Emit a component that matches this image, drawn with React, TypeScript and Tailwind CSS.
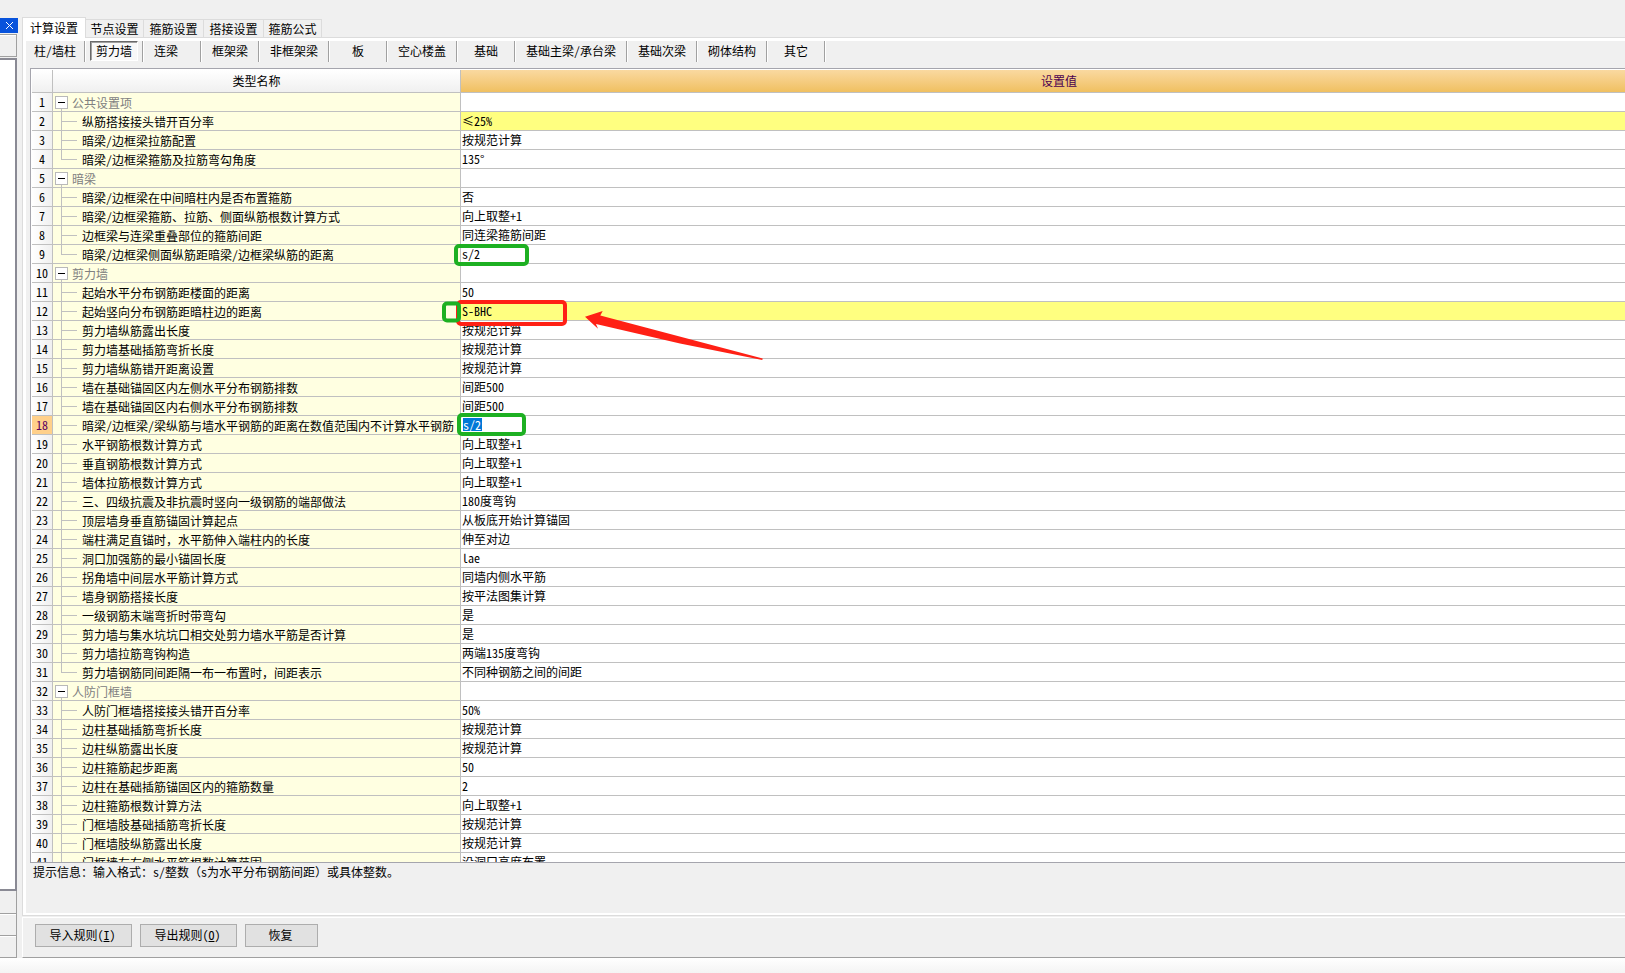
import React, { useState } from "react";

type Row = { name: string; value?: string; group?: boolean; last?: boolean; changed?: boolean };

const rows: Row[] = [
  { name: "公共设置项", group: true },
  { name: "纵筋搭接接头错开百分率", value: "≤25%", changed: true },
  { name: "暗梁/边框梁拉筋配置", value: "按规范计算" },
  { name: "暗梁/边框梁箍筋及拉筋弯勾角度", value: "135°", last: true },
  { name: "暗梁", group: true },
  { name: "暗梁/边框梁在中间暗柱内是否布置箍筋", value: "否" },
  { name: "暗梁/边框梁箍筋、拉筋、侧面纵筋根数计算方式", value: "向上取整+1" },
  { name: "边框梁与连梁重叠部位的箍筋间距", value: "同连梁箍筋间距" },
  { name: "暗梁/边框梁侧面纵筋距暗梁/边框梁纵筋的距离", value: "s/2", last: true },
  { name: "剪力墙", group: true },
  { name: "起始水平分布钢筋距楼面的距离", value: "50" },
  { name: "起始竖向分布钢筋距暗柱边的距离", value: "S-BHC", changed: true },
  { name: "剪力墙纵筋露出长度", value: "按规范计算" },
  { name: "剪力墙基础插筋弯折长度", value: "按规范计算" },
  { name: "剪力墙纵筋错开距离设置", value: "按规范计算" },
  { name: "墙在基础锚固区内左侧水平分布钢筋排数", value: "间距500" },
  { name: "墙在基础锚固区内右侧水平分布钢筋排数", value: "间距500" },
  { name: "暗梁/边框梁/梁纵筋与墙水平钢筋的距离在数值范围内不计算水平钢筋", value: "s/2" },
  { name: "水平钢筋根数计算方式", value: "向上取整+1" },
  { name: "垂直钢筋根数计算方式", value: "向上取整+1" },
  { name: "墙体拉筋根数计算方式", value: "向上取整+1" },
  { name: "三、四级抗震及非抗震时竖向一级钢筋的端部做法", value: "180度弯钩" },
  { name: "顶层墙身垂直筋锚固计算起点", value: "从板底开始计算锚固" },
  { name: "端柱满足直锚时，水平筋伸入端柱内的长度", value: "伸至对边" },
  { name: "洞口加强筋的最小锚固长度", value: "lae" },
  { name: "拐角墙中间层水平筋计算方式", value: "同墙内侧水平筋" },
  { name: "墙身钢筋搭接长度", value: "按平法图集计算" },
  { name: "一级钢筋末端弯折时带弯勾", value: "是" },
  { name: "剪力墙与集水坑坑口相交处剪力墙水平筋是否计算", value: "是" },
  { name: "剪力墙拉筋弯钩构造", value: "两端135度弯钩" },
  { name: "剪力墙钢筋同间距隔一布一布置时，间距表示", value: "不同种钢筋之间的间距", last: true },
  { name: "人防门框墙", group: true },
  { name: "人防门框墙搭接接头错开百分率", value: "50%" },
  { name: "边柱基础插筋弯折长度", value: "按规范计算" },
  { name: "边柱纵筋露出长度", value: "按规范计算" },
  { name: "边柱箍筋起步距离", value: "50" },
  { name: "边柱在基础插筋锚固区内的箍筋数量", value: "2" },
  { name: "边柱箍筋根数计算方法", value: "向上取整+1" },
  { name: "门框墙肢基础插筋弯折长度", value: "按规范计算" },
  { name: "门框墙肢纵筋露出长度", value: "按规范计算" },
  { name: "门框墙左右侧水平筋根数计算范围", value: "沿洞口高度布置" },
];

const EDITED_ROW = 17;
const tabs = ["计算设置", "节点设置", "箍筋设置", "搭接设置", "箍筋公式"];
const members = [
  "柱/墙柱", "剪力墙", "连梁\u00a0\u00a0", "框架梁", "非框架梁", "板", "空心楼盖",
  "基础", "基础主梁/承台梁", "基础次梁", "砌体结构", "其它",
];

// The half-width font feature also narrows these marks, so they opt out of it.
function Text({ children }: { children: string }) {
  return (
    <>
      {children.split(/([，（）])/).map((part, i) =>
        i % 2 ? (
          <span key={i} className="[font-feature-settings:normal]">{part}</span>
        ) : (
          part
        ),
      )}
    </>
  );
}

function TabBar() {
  return (
    <div role="tablist" className="flex h-5 items-end">
      {tabs.map((tab, i) => (
        <button
          key={tab}
          role="tab"
          aria-selected={i === 0}
          className={
            i === 0
              ? "z-10 -mb-px h-[21px] w-16 border border-b-0 border-[#dcdcdc] bg-white pb-px leading-4"
              : "h-[18px] w-[60px] border border-b-0 border-l-0 border-[#dcdcdc] leading-4 last:w-[58px] nth-2:w-[58px]"
          }
        >
          {tab}
        </button>
      ))}
    </div>
  );
}

function MemberBar() {
  const [active, setActive] = useState(1);
  return (
    <div className="flex h-[21px] gap-px">
      {members.map((label, i) => (
        <div
          key={label}
          className="flex min-w-[57px] justify-center border-r border-[#a0a0a0] shadow-[1px_0_0_#ffffff]"
        >
          <button
            aria-pressed={active === i}
            onClick={() => setActive(i)}
            className={
              active === i
                ? "h-5 border border-t-[#696969] border-r-white border-b-white border-l-[#696969] bg-[#f8f8f8] px-[5px] leading-[18px] whitespace-pre shadow-[inset_1px_1px_0_#a0a0a0]"
                : i === 0
                  ? "h-5 px-2 leading-5 whitespace-pre"
                  : "h-5 px-[10px] leading-5 whitespace-pre"
            }
          >
            {label}
          </button>
        </div>
      ))}
    </div>
  );
}

function TreeLabel({ row }: { row: Row }) {
  if (row.group) {
    return (
      <div className="flex h-[18px] items-center pl-[2px]">
        <svg width="13" height="18" viewBox="0 0 13 18" className="mr-1 shrink-0" shapeRendering="crispEdges">
          <rect x="0.5" y="3.5" width="12" height="12" fill="#fff" stroke="#b9b9b9" />
          <path d="M3 9.5h7" stroke="#000" />
          <path d="M6.5 16v2" stroke="#c0c0c0" />
        </svg>
        <span className="text-[#808080]">{row.name}</span>
      </div>
    );
  }
  return (
    <div className="flex h-[18px] items-center">
      <svg width="24" height="18" viewBox="0 0 24 18" className="mr-[5px] shrink-0" shapeRendering="crispEdges">
        <path d={row.last ? "M8.5 0v9.5H24" : "M8.5 0v18M8 9.5h16"} fill="none" stroke="#c0c0c0" />
      </svg>
      <span className="pt-px">
        <Text>{row.name}</Text>
      </span>
    </div>
  );
}

function Marks() {
  return (
    <svg
      aria-hidden="true"
      width="340"
      height="215"
      viewBox="431 230 340 215"
      className="pointer-events-none absolute top-[161px] left-[400px]"
      fill="none"
      strokeWidth="4"
    >
      <rect x="458" y="302" width="107" height="22" rx="3" stroke="#ff2015" />
      <rect x="456" y="246" width="71" height="18" rx="3" stroke="#1db022" />
      <rect x="444" y="303.500" width="15" height="17" rx="3" stroke="#1db022" />
      <rect x="459" y="415" width="65" height="19" rx="3" stroke="#1db022" />
      <path
        d="M585 316.700L602.700 311L600.300 315.500L762.700 358.500L762.300 360L680 343.500L596 324L598 328.700Z"
        fill="#ff2015"
      />
    </svg>
  );
}

function SettingsGrid() {
  return (
    <div className="relative min-h-0 flex-1 overflow-hidden border border-r-0 border-[#a5a5ad] bg-white pt-px pl-px">
      <table className="w-full table-fixed border-separate border-spacing-0">
        <colgroup>
          <col className="w-[21px]" />
          <col className="w-[408px]" />
          <col />
        </colgroup>
        <thead>
          <tr className="h-[23px]">
            <th aria-label="序号" className="border-r border-b border-[#c0c0c0] bg-linear-to-b from-white to-[#f0f0f0] p-0" />
            <th className="border-r border-b border-[#c0c0c0] bg-linear-to-b from-white to-[#f0f0f0] p-0 leading-[18px] font-normal">
              类型名称
            </th>
            <th className="border-b border-[#c0c0c0] bg-linear-to-b from-[#fad9a0] to-[#f0c060] p-0 pl-8 leading-[18px] font-normal text-[#4b0050]">
              设置值
            </th>
          </tr>
        </thead>
        <tbody>
          {rows.map((row, i) => (
            <tr key={i} className="h-[19px]">
              <td
                className={
                  i === EDITED_ROW
                    ? "border-r border-b border-[#c0c0c0] bg-[#ffd08a] p-0 text-center leading-[18px] text-[#5c0060]"
                    : "border-r border-b border-[#c0c0c0] bg-linear-to-r from-white to-[#f0f0f0] p-0 text-center leading-[18px]"
                }
              >
                {i + 1}
              </td>
              <td className="overflow-hidden border-r border-b border-[#c0c0c0] bg-[#ffffe1] p-0 leading-[17px] whitespace-nowrap">
                <TreeLabel row={row} />
              </td>
              <td
                className={
                  row.changed
                    ? "border-b border-[#c0c0c0] bg-[#ffff80] p-0 pl-px leading-[18px] whitespace-nowrap"
                    : "border-b border-[#c0c0c0] bg-white p-0 pl-px leading-[18px] whitespace-nowrap"
                }
              >
                {i === EDITED_ROW ? (
                  <input
                    aria-label={row.name}
                    defaultValue={row.value}
                    className="mb-[2px] ml-px block h-[13px] w-[19px] bg-[#0078d7] leading-3 text-white outline-none"
                  />
                ) : (
                  row.value
                )}
              </td>
            </tr>
          ))}
        </tbody>
      </table>
      <Marks />
    </div>
  );
}

function SidePanel() {
  return (
    <aside className="flex w-[18px] shrink-0 flex-col pt-[18px]">
      <button aria-label="关闭" className="flex h-[15px] items-center justify-center bg-[#0853dc]">
        <svg width="9" height="9" viewBox="0 0 9 9" stroke="#fff" strokeWidth="1">
          <path d="M1 1l7 7M8 1l-7 7" />
        </svg>
      </button>
      <div className="mt-px mr-px h-[23px] border-t border-r border-b border-[#a0a0a0] bg-[#f0f0f0] shadow-[inset_0_1px_0_#ffffff]" />
      <div className="mt-px mr-px flex-1 border-t-2 border-r-2 border-b-2 border-[#8a8a94] bg-white" />
      <div className="mr-px h-[23px] border-r border-b border-[#a0a0a0]" />
      <div className="mr-px h-[22px] border-r border-b border-[#a0a0a0] shadow-[inset_0_1px_0_#ffffff]" />
      <div className="mr-px h-[22px] border-r border-b border-[#a0a0a0] shadow-[inset_0_1px_0_#ffffff]" />
    </aside>
  );
}

function CommandBar() {
  const cls = "h-[23px] border border-[#adadad] bg-[#e1e1e1] pr-[2px] pb-px leading-5";
  return (
    <div className="flex h-[41px] gap-2 border-t border-l border-white border-b border-b-[#a0a0a0] pt-[6px] pl-3">
      <button className={`w-[97px] ${cls}`}>
        导入规则(<u>I</u>)
      </button>
      <button className={`w-[97px] ${cls}`}>
        导出规则(<u>O</u>)
      </button>
      <button className={`w-[73px] ${cls}`}>恢复</button>
    </div>
  );
}

export default function App() {
  return (
    <div className="flex h-screen flex-col overflow-hidden bg-[#f0f0f0] font-['Noto_Sans_CJK_SC',sans-serif] text-[12px] text-black [font-feature-settings:'hwid']">
      <div className="flex min-h-0 flex-1">
        <SidePanel />
        <main className="ml-1 flex min-w-0 flex-1 flex-col pt-[17px]">
          <TabBar />
          <section className="mb-px flex min-h-0 flex-1 flex-col border-t border-b border-l border-[#dcdcdc]">
            <div className="flex min-h-0 flex-1 flex-col border-t-[3px] border-b-2 border-l-[3px] border-white">
              <MemberBar />
              <div className="mt-[6px] ml-1 flex min-h-0 flex-1 flex-col">
                <SettingsGrid />
                <p className="h-[50px] pl-[3px] leading-[18px]">
                  <Text>提示信息：输入格式：s/整数（s为水平分布钢筋间距）或具体整数。</Text>
                </p>
              </div>
            </div>
          </section>
          <CommandBar />
        </main>
      </div>
      <footer className="h-[15px] bg-linear-to-b from-white to-[#f4f4f4]" />
    </div>
  );
}
